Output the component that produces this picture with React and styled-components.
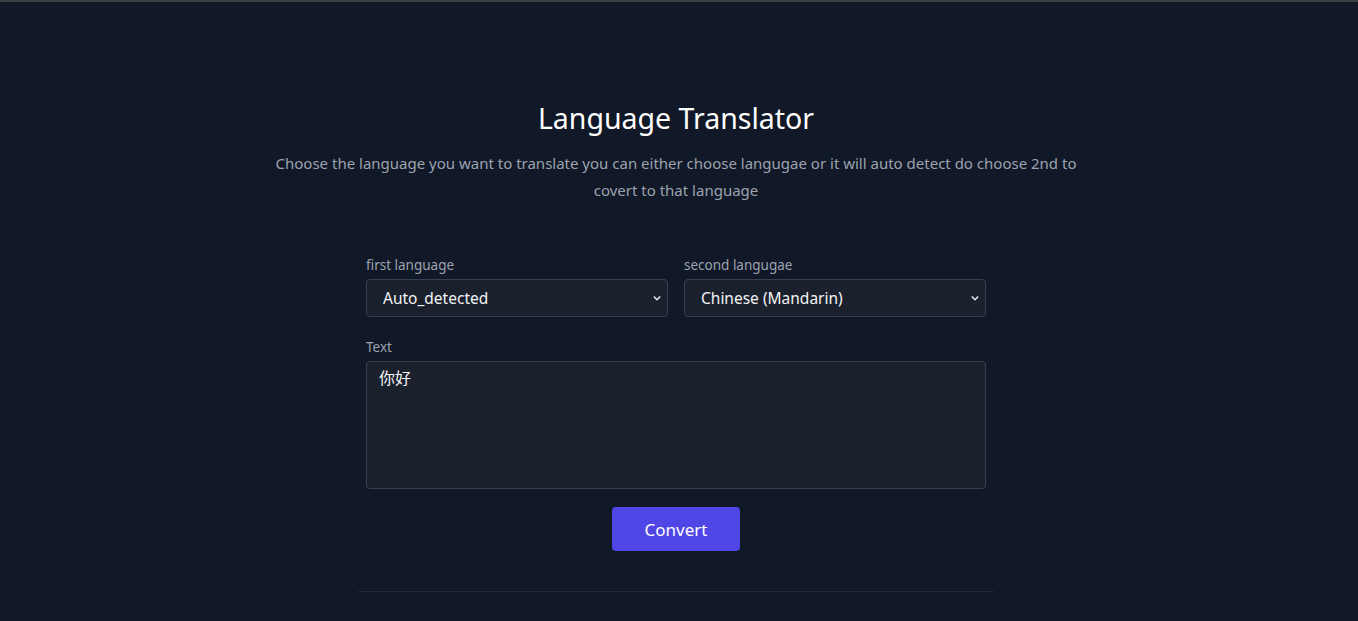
import React from "react";
import styled, { createGlobalStyle } from "styled-components";

const GlobalStyle = createGlobalStyle`
	html, body {
		margin: 0;
		padding: 0;
		background: #111827;
	}
	body {
		font-family: "Noto Sans", "Noto Sans CJK SC", sans-serif;
		color: #f3f4f6;
	}
`;

const Page = styled.div`
	min-height: 621px;
	box-sizing: border-box;
	border-top: 2px solid #3b3e45;
	padding: 98px 6px 0 0;
	display: flex;
	flex-direction: column;
	align-items: center;
`;

const Title = styled.h1`
	margin: 0 0 14px;
	font-size: 28.5px;
	line-height: 36px;
	font-weight: 400;
	color: #ffffff;
`;

const Subtitle = styled.p`
	margin: 0 0 51px;
	width: 820px;
	text-align: center;
	font-size: 15px;
	line-height: 27px;
	color: #9ca3af;
`;

const Form = styled.form`
	width: 620px;
	display: flex;
	flex-direction: column;
	gap: 20px;
`;

const Row = styled.div`
	display: grid;
	grid-template-columns: 1fr 1fr;
	gap: 16px;
`;

const Field = styled.div`
	display: flex;
	flex-direction: column;
	gap: 4px;
`;

const Label = styled.label`
	font-size: 13.5px;
	line-height: 20px;
	color: #9ca3af;
`;

const SelectWrap = styled.div`
	position: relative;
	height: 38px;
	box-sizing: border-box;
	border: 1px solid #374151;
	border-radius: 4px;
	background: #1a202c;
	display: flex;
	align-items: center;
	padding: 0 16px;
	font-size: 15.5px;
	color: #f3f4f6;

	svg {
		position: absolute;
		right: 5px;
		top: 15px;
	}
`;

const TextBox = styled.div`
	height: 128px;
	box-sizing: border-box;
	border: 1px solid #374151;
	border-radius: 4px;
	background: #1a202c;
	padding: 3px 12px;
	font-size: 16px;
	line-height: 24px;
	color: #f3f4f6;
	font-family: "Noto Sans CJK SC", sans-serif;
`;

const Button = styled.button`
	align-self: center;
	margin-top: -2px;
	width: 128px;
	height: 44px;
	border: none;
	border-radius: 4px;
	background: #5046e5;
	color: #ffffff;
	font-family: inherit;
	font-size: 17px;
`;

const Divider = styled.div`
	width: 636px;
	height: 1px;
	margin-top: 40px;
	background: #1f2937;
`;

function Chevron() {
	return (
		<svg width="10" height="7" viewBox="0 0 10 7" fill="none">
			<path d="M1.8 1.5 L5 4.7 L8.2 1.5" stroke="#e5e7eb" strokeWidth="1.6" />
		</svg>
	);
}

function Select({ value }) {
	return (
		<SelectWrap>
			{value}
			<Chevron />
		</SelectWrap>
	);
}

export default function App() {
	return (
		<>
			<GlobalStyle />
			<Page>
				<Title>Language Translator</Title>
				<Subtitle>
					Choose the language you want to translate you can either choose langugae or it will auto detect do choose 2nd to covert to that language
				</Subtitle>
				<Form onSubmit={(e) => e.preventDefault()}>
					<Row>
						<Field>
							<Label>first language</Label>
							<Select value="Auto_detected" />
						</Field>
						<Field>
							<Label>second langugae</Label>
							<Select value="Chinese (Mandarin)" />
						</Field>
					</Row>
					<Field>
						<Label>Text</Label>
						<TextBox>你好</TextBox>
					</Field>
					<Button type="submit">Convert</Button>
				</Form>
				<Divider />
			</Page>
		</>
	);
}
